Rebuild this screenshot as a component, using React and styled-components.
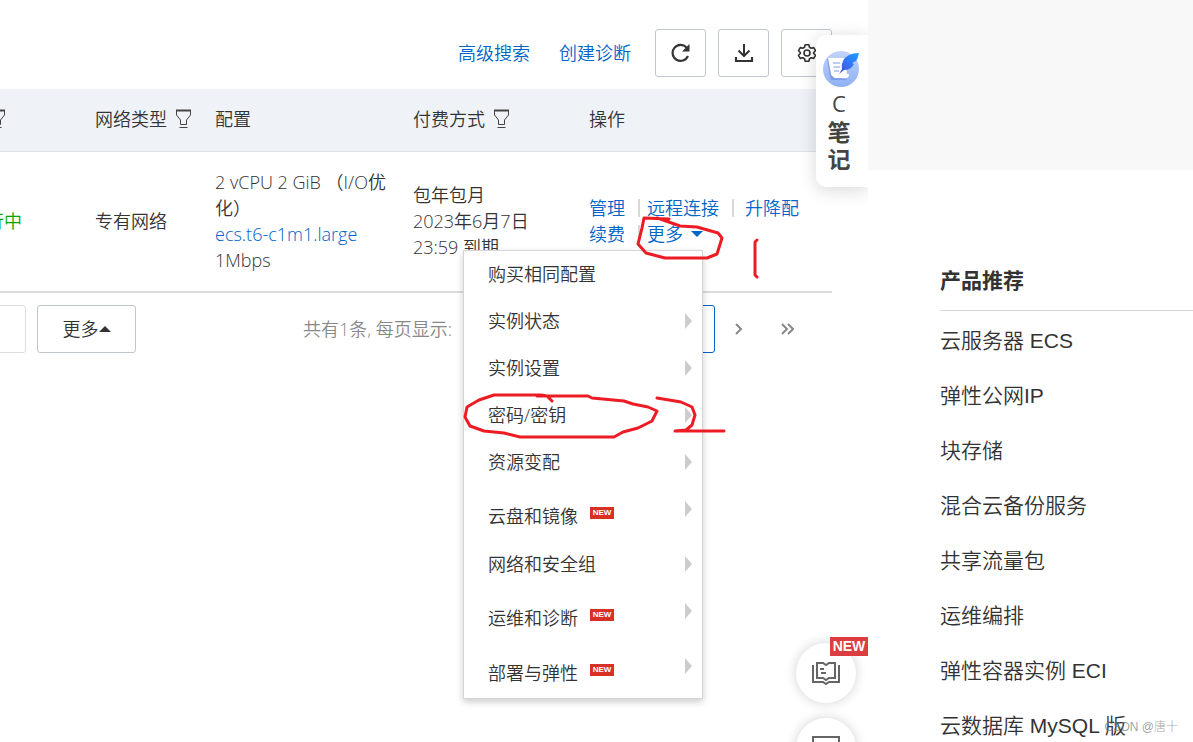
import React from "react";
import styled, { createGlobalStyle } from "styled-components";

const GlobalStyle = createGlobalStyle`
  * {
    box-sizing: border-box;
  }
  body {
    margin: 0;
    background: #fff;
    color: #333;
    font: 350 18px/26px "Open Sans", "Noto Sans CJK SC", sans-serif;
  }
  button,
  input {
    font: inherit;
    color: inherit;
  }
  a {
    color: #0064c8;
    text-decoration: none;
  }
`;

const Page = styled.div`
  position: relative;
  display: flex;
  height: 100vh;
  overflow: hidden;
`;

const Console = styled.main`
  position: relative;
  flex: 1;
  min-width: 0;
  overflow: hidden;
`;

const Toolbar = styled.div`
  display: flex;
  align-items: center;
  justify-content: flex-end;
  gap: 12px;
  padding: 29px 36px 12px 0;
`;

const ToolLinks = styled.nav`
  display: flex;
  gap: 29px;
  margin-right: 12px;
`;

const OutlineButton = styled.button`
  display: flex;
  align-items: center;
  justify-content: center;
  height: 48px;
  width: ${(p) => p.$width || "51px"};
  padding: 0;
  background: #fff;
  border: 1px solid ${(p) => (p.disabled ? "#dcdee3" : "#c0c6cc")};
  border-radius: 3px;
  color: ${(p) => (p.disabled ? "#c1c1c1" : "#333")};
`;

const TableWrap = styled.div`
  margin: 0 36px 0 -71px;
`;

const Table = styled.table`
  width: 100%;
  table-layout: fixed;
  border-collapse: separate;
  border-spacing: 0;

  th,
  td {
    padding: 0 0 2px 16px;
    text-align: left;
  }
  th {
    height: 63px;
    background: #eff3f8;
    border-bottom: 1px solid #dee3e9;
    font-weight: 350;
    white-space: nowrap;
  }
  td {
    height: 141px;
    border-bottom: 2px solid #dcdcdc;
  }
`;

const HeadLabel = styled.span`
  display: flex;
  align-items: center;
  gap: 8px;
`;

const Status = styled.span`
  padding-left: 23px;
  color: #00a700;
`;

const Actions = styled.div`
  display: flex;
  align-items: center;

  a {
    white-space: nowrap;
  }
`;

const Divider = styled.i`
  width: 2px;
  height: 18px;
  margin: 0 ${(p) => p.$after || "7px"} 0 13px;
  background: #d9d9d9;
`;

const More = styled.div`
  position: relative;
  width: 56px;
`;

const MoreButton = styled.button`
  display: flex;
  align-items: center;
  gap: 8px;
  padding: 0;
  border: 0;
  background: none;
  color: #0064c8;
  white-space: nowrap;
`;

const Caret = styled.span`
  border: 6px solid transparent;
  border-bottom-width: ${(p) => (p.$up ? "6px" : "0")};
  border-top-width: ${(p) => (p.$up ? "0" : "6px")};
  border-${(p) => (p.$up ? "bottom" : "top")}-color: currentColor;
`;

const Menu = styled.ul`
  position: absolute;
  z-index: 2;
  top: 29px;
  right: 0;
  width: 240px;
  margin: 0;
  padding: 0;
  list-style: none;
  background: #fff;
  border: 1px solid #d5d5d5;
  box-shadow: 0 3px 7px rgba(0, 0, 0, 0.2);
`;

const MenuItem = styled.li`
  display: flex;
  align-items: flex-start;
  gap: 12px;
  height: ${(p) => (p.$isNew ? "55px" : "47px")};
  padding: 0 10px 0 24px;
`;

const MenuLabel = styled.span`
  padding-top: ${(p) => (p.$isNew ? "7px" : "0")};
  line-height: 47px;
`;

const NewTag = styled.span`
  width: 24px;
  margin-top: 21px;
  background: #d93026;
  color: #fff;
  font: 700 8px/12px "Liberation Sans", Arial, sans-serif;
  text-align: center;
`;

const SubArrow = styled.span`
  margin: 15px 0 0 auto;
  border: 8px solid transparent;
  border-left: 7px solid #ccc;
  border-right: 0;
`;

const Footer = styled.div`
  display: flex;
  align-items: center;
  padding: 12px 57px 0 0;
  margin-left: -71px;
`;

const FooterButtons = styled.div`
  display: flex;
  gap: 11px;
`;

const Pager = styled.div`
  display: flex;
  align-items: center;
  margin-left: auto;
  color: #888;

  label {
    margin-right: 12px;
  }
`;

const PageSize = styled.input`
  width: 100px;
  height: 48px;
  margin-right: 103px;
  padding: 0 12px;
  border: 1px solid #c0c6cc;
  border-radius: 3px;
`;

const PageButton = styled.button`
  display: flex;
  align-items: center;
  justify-content: center;
  width: 48px;
  height: 48px;
  padding: 0;
  background: #fff;
  border: 1px solid ${(p) => (p.$current ? "#0064c8" : "transparent")};
  border-radius: 3px;
  color: ${(p) => (p.$current ? "#0064c8" : "#888")};
`;

const NoteCard = styled.button`
  position: absolute;
  z-index: 3;
  top: 35px;
  right: 0;
  display: flex;
  flex-direction: column;
  align-items: center;
  width: 52px;
  height: 152px;
  padding: 14px 6px 0 0;
  border: 0;
  border-radius: 10px 0 0 10px;
  background: #fff;
  box-shadow: 0 3px 18px rgba(0, 0, 0, 0.16);
  color: #444;
  font: 700 23px/27px "Noto Sans CJK SC", sans-serif;
`;

const NoteLetter = styled.span`
  font: 500 22px/29px "Open Sans", sans-serif;
`;

const Helpers = styled.div`
  position: absolute;
  z-index: 3;
  top: 643px;
  right: 12px;
  display: grid;
  gap: 15px;
`;

const RoundButton = styled.button`
  position: relative;
  display: flex;
  align-items: center;
  justify-content: center;
  width: 60px;
  height: 60px;
  padding: 0;
  border: 0;
  border-radius: 50%;
  background: #fff;
  box-shadow: 0 0 12px rgba(0, 0, 0, 0.18);
  color: #666;
`;

const CornerBadge = styled.span`
  position: absolute;
  top: -6px;
  right: -12px;
  width: 38px;
  background: #db3d40;
  color: #fff;
  font: 700 14px/19px "Liberation Sans", Arial, sans-serif;
  text-align: center;
`;

const Aside = styled.aside`
  flex: 0 0 325px;
  background: #fff;
  font-family: "Liberation Sans", "Noto Sans CJK SC", sans-serif;
`;

const Banner = styled.div`
  height: 170px;
  background: #f8f8f8;
`;

const Products = styled.section`
  padding: 96px 0 0 72px;

  h2 {
    margin: 0;
    padding-bottom: 14px;
    border-bottom: 1px solid #d4d6d6;
    font-size: 21px;
    line-height: 30px;
  }
  ul {
    margin: 2px 0 0;
    padding: 0;
    list-style: none;
  }
  a {
    color: #333;
    font-size: 21px;
    line-height: 55px;
  }
`;

const Watermark = styled.span`
  position: absolute;
  right: 15px;
  bottom: 6px;
  color: rgba(120, 120, 120, 0.7);
  font: 300 12px/18px "Liberation Sans", "Noto Sans CJK SC", sans-serif;
`;

const Strokes = styled.svg`
  position: absolute;
  z-index: 4;
  top: 0;
  left: 0;
  pointer-events: none;
`;

const FilterIcon = () => (
  <svg width="17" height="20" viewBox="0 0 17 20" fill="none" stroke="#444">
    <path d="M1.500 2V6L5.500 11V15.500H11.500V11L15.500 6V2" />
    <path d="M1 1.500H16" strokeWidth="2" />
    <path d="M4.500 18.500H12.500" />
  </svg>
);

const RefreshIcon = () => (
  <svg width="20" height="20" viewBox="0 0 20 20" fill="none">
    <path
      d="M15.500 4.500A8 8 0 1 0 17 13"
      stroke="#333"
      strokeWidth="2.200"
    />
    <path d="M18.500 1V8.500H11Z" fill="#333" />
  </svg>
);

const DownloadIcon = () => (
  <svg width="20" height="20" viewBox="0 0 20 20" fill="none" stroke="#333">
    <path d="M10 1V13M4.500 7.500L10 13L15.500 7.500" strokeWidth="2" />
    <path d="M2 14V18H18V14" strokeWidth="2.200" />
  </svg>
);

const GearIcon = () => (
  <svg width="20" height="20" viewBox="0 0 20 20" fill="none" stroke="#333">
    <path
      d="M8.200 1.800H11.800L12.500 4.300L14.200 5.200L16.700 4.600L18.500 7.700L16.700 9.500V10.500L18.500 12.300L16.700 15.400L14.200 14.800L12.500 15.700L11.800 18.200H8.200L7.500 15.700L5.800 14.800L3.300 15.400L1.500 12.300L3.300 10.500V9.500L1.500 7.700L3.300 4.600L5.800 5.200L7.500 4.300Z"
      strokeWidth="1.600"
      strokeLinejoin="round"
    />
    <circle cx="10" cy="10" r="3" strokeWidth="1.600" />
  </svg>
);

const NoteIcon = () => (
  <svg width="40" height="40" viewBox="-2 0 40 40" overflow="visible">
    <defs>
      <linearGradient id="disc" x1="0" y1="0" x2="0" y2="1">
        <stop offset="0" stopColor="#c3d4fa" />
        <stop offset="1" stopColor="#8fb0f3" />
      </linearGradient>
      <linearGradient id="quill" x1="1" y1="0" x2="0" y2="1">
        <stop offset="0" stopColor="#1aa0ff" />
        <stop offset="1" stopColor="#4a4be8" />
      </linearGradient>
    </defs>
    <circle cx="20" cy="20" r="18" fill="url(#disc)" />
    <path d="M6 10L9 9L13 29L26 30L24 31H12Q9 31 9 28Z" fill="#7d9ce8" />
    <path d="M7 9H23Q25 9 25 12L26 27H12Q10 27 10 25Z" fill="#fff" />
    <path d="M12 25H28Q28 29 25 29H14Q11 28 10 24Z" fill="#fff" />
    <path
      d="M12 14H19M12.500 18H19M13 22H18"
      stroke="#a5bdf2"
      strokeWidth="1.500"
    />
    <path
      d="M38 4Q26 4 22 12Q20 16 21 20L18 25L23 21Q30 21 33 15L31 14L35 12Q37 9 38 4Z"
      fill="url(#quill)"
    />
  </svg>
);

const BookIcon = () => (
  <svg
    width="28"
    height="24"
    viewBox="0 0 28 24"
    fill="none"
    stroke="#666"
    strokeWidth="2"
  >
    <path d="M1 4V21H11L14 23L17 21H27V4" />
    <path d="M5 2H11L14 4L17 2H23V17H17L14 19L11 17H5Z" />
    <path d="M8 8H12M9 12H14" />
  </svg>
);

const ScreenIcon = () => (
  <svg
    width="28"
    height="24"
    viewBox="0 0 28 24"
    fill="none"
    stroke="#666"
    strokeWidth="2"
  >
    <path d="M1 1H27V18H1Z" />
  </svg>
);

const NextIcon = () => (
  <svg width="8" height="12" fill="none" stroke="#888" strokeWidth="2">
    <path d="M1 1L6 6L1 11" />
  </svg>
);

const LastIcon = () => (
  <svg width="13" height="12" fill="none" stroke="#888" strokeWidth="2">
    <path d="M1 1L6 6L1 11M7 1L12 6L7 11" />
  </svg>
);

const menuItems = [
  { label: "购买相同配置", leaf: true },
  { label: "实例状态" },
  { label: "实例设置" },
  { label: "密码/密钥" },
  { label: "资源变配" },
  { label: "云盘和镜像", isNew: true },
  { label: "网络和安全组" },
  { label: "运维和诊断", isNew: true },
  { label: "部署与弹性", isNew: true },
];

const products = [
  "云服务器 ECS",
  "弹性公网IP",
  "块存储",
  "混合云备份服务",
  "共享流量包",
  "运维编排",
  "弹性容器实例 ECI",
  "云数据库 MySQL 版",
];

const ActionMenu = () => (
  <Menu>
    {menuItems.map(({ label, isNew, leaf }) => (
      <MenuItem key={label} $isNew={isNew}>
        <MenuLabel $isNew={isNew}>{label}</MenuLabel>
        {isNew && <NewTag>NEW</NewTag>}
        {!leaf && <SubArrow />}
      </MenuItem>
    ))}
  </Menu>
);

const InstanceTable = () => (
  <TableWrap>
    <Table>
      <colgroup>
        <col width="150" />
        <col width="120" />
        <col width="198" />
        <col width="176" />
        <col />
      </colgroup>
      <thead>
        <tr>
          <th>
            <HeadLabel>
              状态 <FilterIcon />
            </HeadLabel>
          </th>
          <th>
            <HeadLabel>
              网络类型 <FilterIcon />
            </HeadLabel>
          </th>
          <th>配置</th>
          <th>
            <HeadLabel>
              付费方式 <FilterIcon />
            </HeadLabel>
          </th>
          <th>操作</th>
        </tr>
      </thead>
      <tbody>
        <tr>
          <td>
            <Status>运行中</Status>
          </td>
          <td>专有网络</td>
          <td>
            2 vCPU 2 GiB （I/O优化）
            <br />
            <a href="#spec">ecs.t6-c1m1.large</a>
            <br />
            1Mbps
          </td>
          <td>
            包年包月
            <br />
            2023年6月7日
            <br />
            23:59 到期
          </td>
          <td>
            <Actions>
              <a href="#manage">管理</a>
              <Divider />
              <a href="#remote">远程连接</a>
              <Divider $after="11px" />
              <a href="#resize">升降配</a>
            </Actions>
            <Actions>
              <a href="#renew">续费</a>
              <Divider />
              <More>
                <MoreButton>
                  更多 <Caret />
                </MoreButton>
                <ActionMenu />
              </More>
            </Actions>
          </td>
        </tr>
      </tbody>
    </Table>
  </TableWrap>
);

const App = () => {
  return (
    <Page>
      <GlobalStyle />
      <Console>
        <Toolbar>
          <ToolLinks>
            <a href="#search">高级搜索</a>
            <a href="#diagnose">创建诊断</a>
          </ToolLinks>
          <OutlineButton aria-label="刷新">
            <RefreshIcon />
          </OutlineButton>
          <OutlineButton aria-label="下载">
            <DownloadIcon />
          </OutlineButton>
          <OutlineButton aria-label="设置">
            <GearIcon />
          </OutlineButton>
        </Toolbar>
        <InstanceTable />
        <Footer>
          <FooterButtons>
            <OutlineButton disabled $width="97px">
              标签
            </OutlineButton>
            <OutlineButton $width="99px">
              更多
              <Caret $up />
            </OutlineButton>
          </FooterButtons>
          <Pager>
            <label htmlFor="pageSize">共有1条, 每页显示:</label>
            <PageSize id="pageSize" defaultValue="20" />
            <PageButton $current>1</PageButton>
            <PageButton aria-label="下一页">
              <NextIcon />
            </PageButton>
            <PageButton aria-label="末页">
              <LastIcon />
            </PageButton>
          </Pager>
        </Footer>
        <NoteCard>
          <NoteIcon />
          <NoteLetter>C</NoteLetter>
          <span>笔</span>
          <span>记</span>
        </NoteCard>
        <Helpers>
          <RoundButton aria-label="文档">
            <BookIcon />
            <CornerBadge>NEW</CornerBadge>
          </RoundButton>
          <RoundButton aria-label="屏幕">
            <ScreenIcon />
          </RoundButton>
        </Helpers>
      </Console>
      <Aside>
        <Banner />
        <Products>
          <h2>产品推荐</h2>
          <ul>
            {products.map((name) => (
              <li key={name}>
                <a href="#product">{name}</a>
              </li>
            ))}
          </ul>
        </Products>
      </Aside>
      <Watermark>CSDN @唐十</Watermark>
      <Strokes
        width="868"
        height="500"
        viewBox="0 0 868 500"
        fill="none"
        stroke="#ed1c24"
        strokeWidth="3"
        strokeLinecap="round"
        strokeLinejoin="round"
      >
        <path d="M669 219L644 218L642 228L638 244L646 253L665 258H707L717 254L722 238L718 233L697 227L680 226L666 221L657 218" />
        <path d="M757 240L755 242V275L757 277" />
        <path d="M552 401L547 396L541 395H494L479 400L467 407L465 417L470 426L484 431L504 433L520 437H614L623 432L638 428L652 421L657 411L648 407L633 404L624 401L592 398L588 396H537" />
        <path d="M657 398L681 402L692 407L695 415L692 425L686 430L675 431H724" />
      </Strokes>
    </Page>
  );
};

export default App;
